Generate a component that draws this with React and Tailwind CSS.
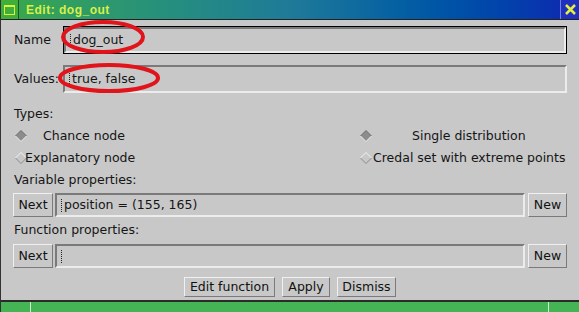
import React from "react";

const font = { fontFamily: '"DejaVu Sans", "Liberation Sans", sans-serif' };

function Diamond({ on }) {
  return (
    <svg width="12" height="12" viewBox="0 0 12 12" className="shrink-0">
      <polygon points="6,0.5 11.5,6 6,11.5 0.5,6" fill={on ? "#8c8c8c" : "#c8c8c8"} />
      <polyline points="0.5,6 6,0.5 11.5,6" fill="none" stroke={on ? "#6a6a6a" : "#f2f2f2"} strokeWidth="1" />
      <polyline points="0.5,6 6,11.5 11.5,6" fill="none" stroke={on ? "#eeeeee" : "#8a8a8a"} strokeWidth="1" />
    </svg>
  );
}

function Btn({ children, className = "" }) {
  return (
    <div className={`flex items-center justify-center bg-[#c8c8c8] border border-t-[#f0f0f0] border-l-[#f0f0f0] border-r-[#7a7a7a] border-b-[#7a7a7a] text-[#111] ${className}`}>
      {children}
    </div>
  );
}

function Field({ children, className = "", focused }) {
  return (
    <div className={`flex items-center bg-[#c8c8c8] ${focused ? "border border-black" : ""} ${className}`}>
      <div className="flex-1 h-full flex items-center border-2 border-t-[#7a7a7a] border-l-[#7a7a7a] border-r-[#ececec] border-b-[#ececec] pl-[4px]">
        {children}
      </div>
    </div>
  );
}

function Caret() {
  return <span className="inline-block w-[1px] h-[13px] border-l border-dotted border-[#222] mr-[2px]" />;
}

export default function App() {
  return (
    <div className="w-[579px] h-[312px] flex flex-col bg-[#c8c8c8] text-[12.5px] text-[#151515] overflow-hidden border-l border-[#333]" style={font}>
      {/* title bar */}
      <div className="h-[20px] flex items-stretch bg-gradient-to-r from-[#3aa848] via-[#1f7a98] to-[#1024b0] border-b border-[#222]">
        <div className="w-[18px] flex items-center justify-center bg-[#3fae3a] border-r border-[#1a5a20]">
          <div className="w-[11px] h-[10px] border border-[#d8f040] border-t-2" />
        </div>
        <div className="pl-[7px] flex items-center font-bold text-[#d8f048] text-[12px] tracking-[0.5px]" style={{ fontFamily: '"Liberation Sans", sans-serif' }}>
          Edit: dog_out
        </div>
        <div className="flex-1" />
        <div className="w-[19px] flex items-center justify-center bg-[#1f30c0] border-l border-[#7080e0]">
          <svg width="13" height="13" viewBox="0 0 13 13">
            <path d="M2 2 L11 11 M11 2 L2 11" stroke="#e4f040" strokeWidth="2.5" />
          </svg>
        </div>
      </div>

      {/* body */}
      <div className="flex-1 flex flex-col px-[12px] relative">
        <div className="h-[6px] shrink-0" />
        <div className="h-[28px] flex items-center">
          <div className="w-[50px] pl-[1px]">Name</div>
          <Field focused className="flex-1 h-[28px]">
            <Caret />dog_out
          </Field>
        </div>
        <div className="h-[11px] shrink-0" />
        <div className="h-[28px] flex items-center">
          <div className="w-[50px] pl-[1px]">Values:</div>
          <Field className="flex-1 h-[28px]">
            <Caret />true, false
          </Field>
        </div>
        <div className="h-[10px] shrink-0" />
        <div className="h-[22px] flex items-center pl-[1px]">Types:</div>
        <div className="h-[22px] flex items-center">
          <div className="flex-1 flex items-center pl-[2px]">
            <Diamond on />
            <span className="ml-[16px]">Chance node</span>
          </div>
          <div className="w-[207px] flex items-center">
            <Diamond on />
            <span className="ml-[40px]">Single distribution</span>
          </div>
        </div>
        <div className="h-[22px] flex items-center">
          <div className="flex-1 flex items-center pl-[2px]">
            <Diamond />
            <span className="-ml-[2px]">Explanatory node</span>
          </div>
          <div className="w-[207px] flex items-center">
            <Diamond />
            <span className="ml-[1px]">Credal set with extreme points</span>
          </div>
        </div>
        <div className="h-[22px] flex items-center pl-[1px]">Variable properties:</div>
        <div className="h-[24px] flex items-center gap-[2px] mt-[2px]">
          <Btn className="w-[40px] h-[24px]">Next</Btn>
          <Field className="flex-1 h-[24px]">
            <Caret />position = (155, 165)
          </Field>
          <Btn className="w-[39px] h-[24px] ml-[1px]">New</Btn>
        </div>
        <div className="h-[26px] flex items-center pl-[1px]">Function properties:</div>
        <div className="h-[24px] flex items-center gap-[2px] mt-[1px]">
          <Btn className="w-[40px] h-[24px]">Next</Btn>
          <Field className="flex-1 h-[24px]">
            <Caret />
          </Field>
          <Btn className="w-[39px] h-[24px] ml-[1px]">New</Btn>
        </div>
        <div className="h-[9px] shrink-0" />
        <div className="flex justify-center gap-[7px]">
          <Btn className="w-[91px] h-[20px]">Edit function</Btn>
          <Btn className="w-[48px] h-[20px]">Apply</Btn>
          <Btn className="w-[59px] h-[20px]">Dismiss</Btn>
        </div>

        {/* red annotation ellipses */}
        <svg className="absolute left-0 top-0 pointer-events-none" width="579" height="100">
          <ellipse cx="102" cy="17" rx="40" ry="15" fill="none" stroke="#e0141a" strokeWidth="4" />
          <ellipse cx="108" cy="58" rx="49" ry="13" fill="none" stroke="#e0141a" strokeWidth="4" />
        </svg>
      </div>

      {/* bottom frame */}
      <div className="h-[12px] flex border-t-2 border-[#2a2a2a] bg-[#44b455]">
        <div className="w-[30px] border-r border-[#d0f0d0]" />
        <div className="flex-1 border-r border-[#d0f0d0]" />
        <div className="w-[30px]" />
      </div>
    </div>
  );
}
